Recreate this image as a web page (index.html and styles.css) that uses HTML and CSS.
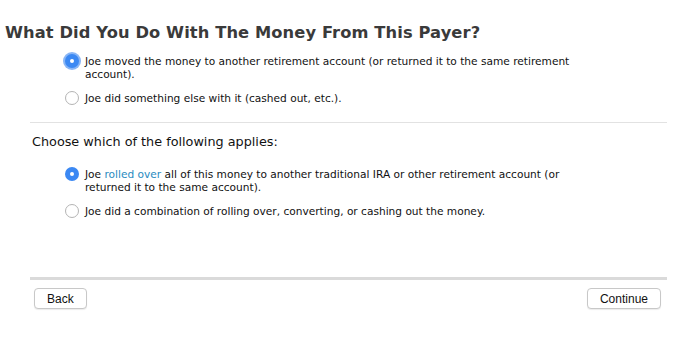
FILE: index.html
```html
<!DOCTYPE html>
<html>
<head>
<meta charset="utf-8">
<link rel="stylesheet" href="styles.css">
</head>
<body>
<div class="page">
  <h1 class="title">What Did You Do With The Money From This Payer?</h1>
  <div class="options first">
    <label class="option">
      <span class="radio checked focused"></span>
      <span class="text">Joe moved the money to another retirement account (or returned it to the same retirement account).</span>
    </label>
    <label class="option">
      <span class="radio"></span>
      <span class="text">Joe did something else with it (cashed out, etc.).</span>
    </label>
  </div>
  <div class="divider"></div>
  <p class="question">Choose which of the following applies:</p>
  <div class="options second">
    <label class="option">
      <span class="radio checked"></span>
      <span class="text">Joe <a class="link">rolled over</a> all of this money to another traditional IRA or other retirement account (or returned it to the same account).</span>
    </label>
    <label class="option">
      <span class="radio"></span>
      <span class="text">Joe did a combination of rolling over, converting, or cashing out the money.</span>
    </label>
  </div>
  <div class="footer">
    <button class="btn">Back</button>
    <button class="btn">Continue</button>
  </div>
</div>
</body>
</html>
```
FILE: styles.css
```css
html, body {
  margin: 0;
  padding: 0;
  background: #ffffff;
}
body {
  font-family: "DejaVu Sans", "Verdana", sans-serif;
  color: #1a1a1a;
}
.page {
  width: 677px;
  height: 358px;
  box-sizing: border-box;
  padding-top: 21px;
}
.title {
  margin: 0 0 0 5px;
  font-size: 16.3px;
  font-weight: bold;
  color: #3a3a3a;
  line-height: 24px;
  letter-spacing: 0.1px;
}
.options {
  display: flex;
  flex-direction: column;
  gap: 11px;
  padding-left: 65px;
  padding-right: 92px;
}
.options.first {
  margin-top: 10px;
}
.option {
  display: flex;
  align-items: flex-start;
  gap: 6px;
}
.radio {
  flex: 0 0 auto;
  width: 14px;
  height: 14px;
  box-sizing: border-box;
  border-radius: 50%;
  border: 1px solid #b4b4b4;
  background: #fff;
  margin-top: -1px;
  position: relative;
}
.radio.checked {
  border: none;
  background: #3b88f3;
}
.radio.checked::after {
  content: "";
  position: absolute;
  left: 5px;
  top: 5px;
  width: 4px;
  height: 4px;
  border-radius: 50%;
  background: #fff;
}
.radio.focused {
  box-shadow: 0 0 0 2px #8ab6f5;
}
.text {
  font-size: 10.6px;
  line-height: 13px;
  color: #111;
}
.link {
  color: #2a8bbf;
}
.divider {
  margin: 17px 10px 0 30px;
  height: 1px;
  background: #e2e2e2;
}
.question {
  margin: 11px 0 0 32px;
  font-size: 12.8px;
  line-height: 16px;
  color: #111;
}
.options.second {
  margin-top: 18px;
}
.footer {
  margin: 59px 10px 0 30px;
  border-top: 3px solid #dadada;
  padding: 8px 6px 0 4px;
  display: flex;
  justify-content: space-between;
}
.btn {
  font-family: "Liberation Sans", Arial, sans-serif;
  font-size: 12px;
  color: #111;
  background: #fff;
  border: 1px solid #c8c8c8;
  border-radius: 4px;
  height: 21px;
  padding: 0 12px;
  box-shadow: 0 1px 1px rgba(0,0,0,0.08);
}
```
